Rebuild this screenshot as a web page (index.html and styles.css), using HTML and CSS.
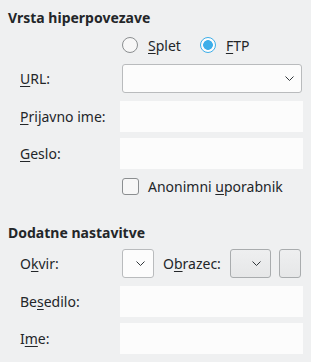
FILE: index.html
```html
<!DOCTYPE html>
<html>
<head>
<meta charset="utf-8">
<link rel="stylesheet" href="styles.css">
</head>
<body>
<div class="page">
  <div class="heading h1">Vrsta hiperpovezave</div>
  <div class="radios">
    <span class="radio"></span><span class="rlabel"><u>S</u>plet</span>
    <span class="radio checked"></span><span class="rlabel"><u>F</u>TP</span>
  </div>
  <div class="row r-url">
    <span class="label"><u>U</u>RL:</span>
    <div class="combo wide">
      <svg class="chev" width="9" height="5" viewBox="0 0 9 5"><path d="M0.5 0.5 L4.5 4.5 L8.5 0.5" fill="none" stroke="#31363b" stroke-width="1"/></svg>
    </div>
  </div>
  <div class="row r-login">
    <span class="label"><u>P</u>rijavno ime:</span>
    <div class="input"></div>
  </div>
  <div class="row r-pass">
    <span class="label"><u>G</u>eslo:</span>
    <div class="input"></div>
  </div>
  <div class="row r-check">
    <span class="label"></span>
    <span class="checkbox"></span><span class="clabel">Anonimni <u>u</u>porabnik</span>
  </div>
  <div class="heading h2">Dodatne nastavitve</div>
  <div class="row r-frame">
    <span class="label">O<u>k</u>vir:</span>
    <div class="combo small">
      <svg class="chev" width="9" height="5" viewBox="0 0 9 5"><path d="M0.5 0.5 L4.5 4.5 L8.5 0.5" fill="none" stroke="#31363b" stroke-width="1"/></svg>
    </div>
    <span class="flabel">O<u>b</u>razec:</span>
    <div class="combo form">
      <svg class="chev" width="9" height="5" viewBox="0 0 9 5"><path d="M0.5 0.5 L4.5 4.5 L8.5 0.5" fill="none" stroke="#31363b" stroke-width="1"/></svg>
    </div>
    <div class="btn"></div>
  </div>
  <div class="row r-text">
    <span class="label">Be<u>s</u>edilo:</span>
    <div class="input"></div>
  </div>
  <div class="row r-name">
    <span class="label">I<u>m</u>e:</span>
    <div class="input"></div>
  </div>
</div>
</body>
</html>
```
FILE: styles.css
```css
html, body {
  margin: 0;
  padding: 0;
  background: #eff0f1;
}
body {
  font-family: "Noto Sans", "Open Sans", sans-serif;
  font-size: 14px;
  color: #232629;
  width: 311px;
  height: 362px;
  overflow: hidden;
}
.page {
  padding: 0 8px 0 8px;
}
u {
  text-decoration-thickness: 1px;
  text-underline-offset: 2px;
}
.heading {
  font-weight: bold;
  line-height: 19px;
  height: 19px;
}
.h1 { margin-top: 8px; }
.h2 { margin-top: 25px; }
.radios {
  display: flex;
  align-items: center;
  height: 22px;
  margin-top: 7px;
  padding-left: 114px;
}
.radio {
  box-sizing: border-box;
  width: 16px;
  height: 16px;
  border-radius: 50%;
  border: 1px solid #8b8e90;
  background: #f7f7f7;
  flex: none;
}
.radio.checked {
  border-color: #3daee9;
  background: radial-gradient(circle, #3daee9 0, #3daee9 4.5px, #fcfcfc 5.2px);
}
.rlabel {
  margin-left: 10px;
  margin-right: 19px;
}
.row {
  display: flex;
  align-items: center;
}
.label {
  width: 112px;
  padding-left: 12px;
  box-sizing: border-box;
  flex: none;
  line-height: 19px;
}
.r-url { margin-top: 8px; height: 29px; }
.r-login { margin-top: 8px; height: 31px; }
.r-pass { margin-top: 6px; height: 31px; }
.r-check { margin-top: 6px; height: 23px; }
.r-frame { margin-top: 7px; height: 29px; }
.r-text { margin-top: 8px; height: 31px; }
.r-name { margin-top: 6px; height: 31px; }
.input {
  width: 183px;
  height: 31px;
  background: #fcfcfc;
}
.combo {
  box-sizing: border-box;
  height: 29px;
  border: 1px solid #b9bbbd;
  border-radius: 3px;
  background: #fcfcfc;
  display: flex;
  align-items: center;
  justify-content: flex-end;
}
.combo.wide {
  width: 180px;
  margin-left: 2px;
  padding-right: 7px;
}
.combo.small {
  width: 32px;
  margin-left: 2px;
  padding-right: 8px;
}
.combo.form {
  width: 41px;
  padding-right: 9px;
  background: linear-gradient(#eeeff0, #e6e7e8);
  border-color: #a9acae;
}
.chev { display: block; }
.flabel {
  margin-left: 9px;
  margin-right: 9px;
}
.btn {
  box-sizing: border-box;
  width: 22px;
  height: 29px;
  margin-left: 8px;
  border: 1px solid #a9acae;
  border-radius: 3px;
  background: linear-gradient(#eeeff0, #e6e7e8);
}
.checkbox {
  box-sizing: border-box;
  width: 17px;
  height: 17px;
  margin-left: 2px;
  border: 1px solid #8b8e90;
  border-radius: 3px;
  background: #f7f7f7;
  flex: none;
}
.clabel { margin-left: 9px; }
```
